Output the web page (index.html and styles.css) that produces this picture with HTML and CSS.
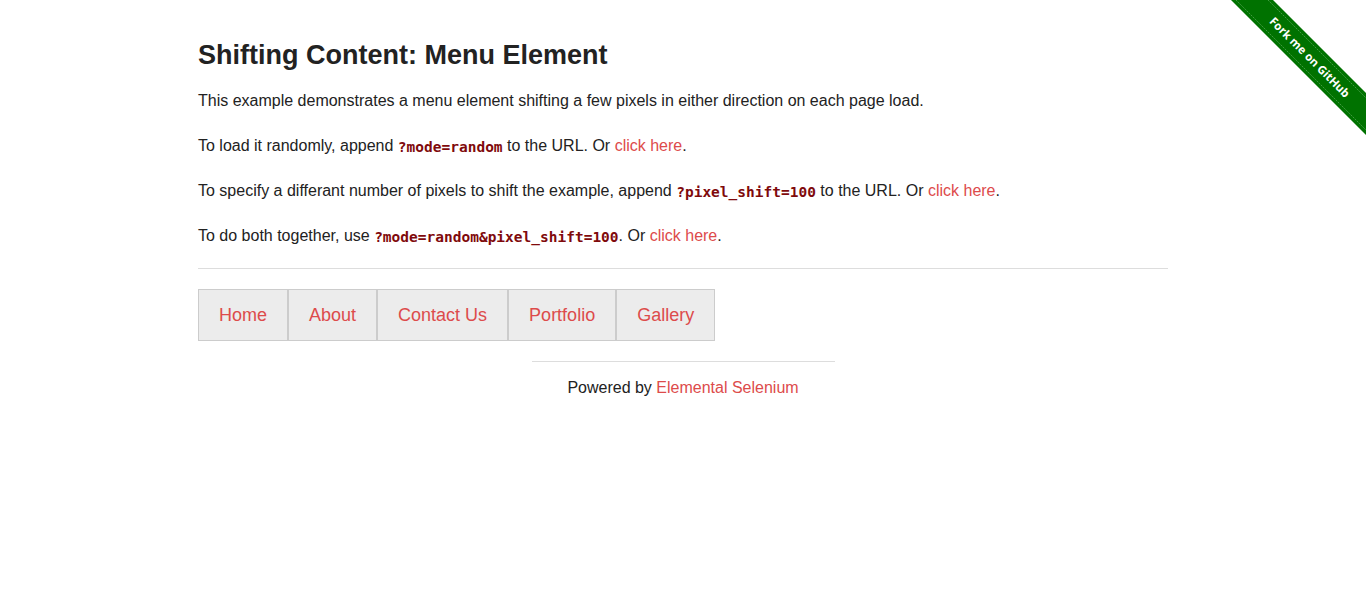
FILE: index.html
```html
<!DOCTYPE html>
<html>
<head>
<meta charset="utf-8">
<title>The Internet</title>
<link rel="stylesheet" href="styles.css">
</head>
<body>
<a class="ribbon" href="#">
  <svg width="149" height="149" viewBox="0 0 149 149">
    <polygon points="14,0 56,0 149,93 149,135" fill="#007200"/>
    <line x1="19" y1="0" x2="149" y2="130" stroke="#3f9a3f" stroke-width="1" stroke-dasharray="2,1"/>
    <line x1="51" y1="0" x2="149" y2="98" stroke="#3f9a3f" stroke-width="1" stroke-dasharray="2,1"/>
    <text x="93" y="57" transform="rotate(45 93 57)" text-anchor="middle" dominant-baseline="central" class="ribbon-text">Fork me on GitHub</text>
  </svg>
</a>
<div class="page">
  <div class="content">
    <h3 class="title">Shifting Content: Menu Element</h3>
    <p class="para">This example demonstrates a menu element shifting a few pixels in either direction on each page load.</p>
    <p class="para">To load it randomly, append <code class="code">?mode=random</code> to the URL. Or <a class="link" href="#">click here</a>.</p>
    <p class="para">To specify a differant number of pixels to shift the example, append <code class="code">?pixel_shift=100</code> to the URL. Or <a class="link" href="#">click here</a>.</p>
    <p class="para">To do both together, use <code class="code">?mode=random&amp;pixel_shift=100</code>. Or <a class="link" href="#">click here</a>.</p>
    <hr class="rule">
    <ul class="menu">
      <li class="menu-item"><a class="menu-link" href="#">Home</a></li>
      <li class="menu-item"><a class="menu-link" href="#">About</a></li>
      <li class="menu-item"><a class="menu-link" href="#">Contact Us</a></li>
      <li class="menu-item"><a class="menu-link" href="#">Portfolio</a></li>
      <li class="menu-item"><a class="menu-link" href="#">Gallery</a></li>
    </ul>
  </div>
  <div class="footer">
    <hr class="footer-rule">
    <div class="footer-text">Powered by <a class="link" href="#">Elemental Selenium</a></div>
  </div>
</div>
</body>
</html>
```
FILE: styles.css
```css
html, body {
  margin: 0;
  padding: 0;
  background: #fff;
}
body {
  font-family: "Liberation Sans", Arial, Helvetica, sans-serif;
  color: #222;
  font-size: 16px;
}
.page {
  width: 970px;
  margin: 0 auto;
  padding-top: 37px;
}
.title {
  font-size: 27px;
  line-height: 37.8px;
  font-weight: bold;
  margin: 0 0 13.5px 0;
  color: #222;
}
.para {
  margin: 0 0 20px 0;
  line-height: 25px;
}
.code {
  font-family: "DejaVu Sans Mono", "Liberation Mono", monospace;
  font-size: 14.5px;
  line-height: 1;
  font-weight: bold;
  color: #7f0a0c;
  position: relative;
  top: 1px;
}
.link {
  color: #dd4b4b;
  text-decoration: none;
}
.rule {
  border: 0;
  border-top: 1px solid #ddd;
  height: 0;
  margin: 0 0 20px 0;
}
.menu {
  list-style: none;
  margin: 0;
  padding: 0;
  display: flex;
}
.menu-item {
  background: #ececec;
  border: 1px solid #ccc;
}
.menu-link {
  display: block;
  padding: 15px 20px;
  font-size: 18px;
  line-height: 20px;
  color: #dd4b4b;
  text-decoration: none;
}
.footer {
  width: 303px;
  margin: 0 auto;
}
.footer-rule {
  border: 0;
  border-top: 1px solid #ddd;
  height: 0;
  margin: 20px 0 13px 0;
}
.footer-text {
  text-align: center;
  line-height: 25px;
}
.ribbon {
  position: absolute;
  top: 0;
  right: 0;
  width: 149px;
  height: 149px;
  display: block;
}
.ribbon svg {
  display: block;
}
.ribbon-text {
  font-family: "Open Sans", "DejaVu Sans", sans-serif;
  font-weight: bold;
  font-size: 11.5px;
  fill: #fff;
}
```
